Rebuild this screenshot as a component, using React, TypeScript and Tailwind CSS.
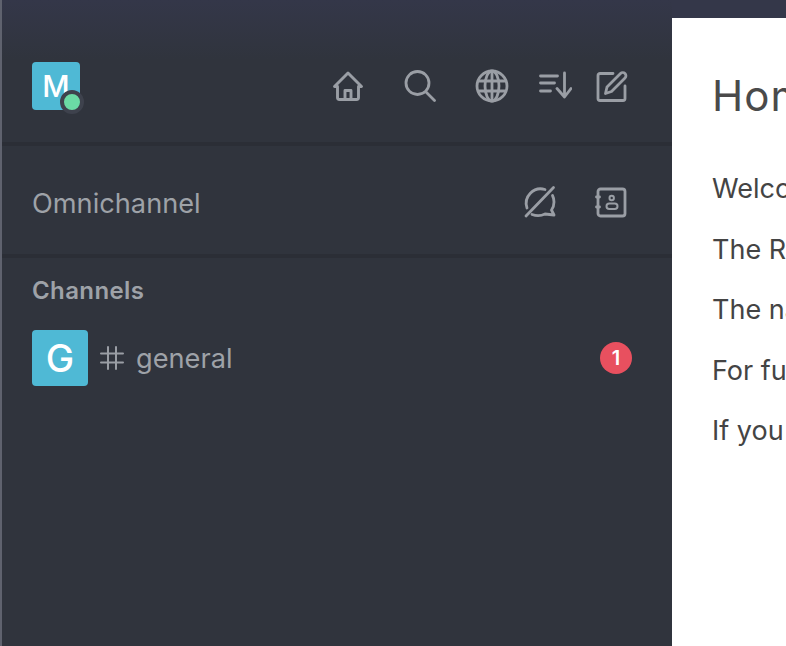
const FONT = "font-['Inter','Liberation_Sans',sans-serif]";

function IconButton({ children, className = "" }: { children: React.ReactNode; className?: string }) {
  return <div className={`flex h-9 w-9 items-center justify-center text-[#9a9ea5] ${className}`}>{children}</div>;
}

function HomeIcon() {
  return (
    <svg width="32" height="32" viewBox="0 0 32 32" fill="none" stroke="currentColor" strokeWidth="2.9" strokeLinecap="round" strokeLinejoin="round">
      <path d="M2.500 16.500 16 3l13.500 13.500h-3v11a2 2 0 0 1-2 2h-17a2 2 0 0 1-2-2v-11z" />
      <path d="M13 29v-8.500h6V29" />
    </svg>
  );
}

function SearchIcon() {
  return (
    <svg width="32" height="32" viewBox="0 0 32 32" fill="none" stroke="currentColor" strokeWidth="2.8" strokeLinecap="round">
      <circle cx="13.500" cy="13" r="11.500" />
      <path d="m22 22 8.500 8.500" />
    </svg>
  );
}

function GlobeIcon() {
  return (
    <svg width="34" height="34" viewBox="0 0 34 34" fill="none" stroke="currentColor" strokeWidth="2.8">
      <circle cx="17" cy="17" r="15" />
      <ellipse cx="17" cy="17" rx="7" ry="15" />
      <path d="M3.500 12h27M3.500 22h27M17 2v30" />
    </svg>
  );
}

function SortIcon() {
  return (
    <svg width="34" height="30" viewBox="0 0 34 30" fill="none" stroke="currentColor" strokeWidth="2.8" strokeLinecap="round" strokeLinejoin="round">
      <path d="M2.500 5h17M2.500 12h14M2.500 20h10" />
      <path d="M26.500 2v24M19 17.500l7.500 8.500 6.500-8.500" />
    </svg>
  );
}

function EditIcon() {
  return (
    <svg width="32" height="32" viewBox="0 0 32 32" fill="none" stroke="currentColor" strokeWidth="2.8" strokeLinecap="round" strokeLinejoin="round">
      <path d="M17 3.500H4a2 2 0 0 0-2 2v23a2 2 0 0 0 2 2h23a2 2 0 0 0 2-2V16" />
      <path d="M9.500 23.500 11 17 24.500 3.500a3 3 0 0 1 4.500 4.500L15.500 21.500z" />
    </svg>
  );
}

function ChatOffIcon() {
  return (
    <svg width="34" height="34" viewBox="0 0 34 34" fill="none" stroke="currentColor" strokeWidth="2.8" strokeLinecap="round" strokeLinejoin="round">
      <path d="M31.500 2.500 4 31" />
      <path d="M23 4.500A14.500 14.500 0 0 0 5 23" />
      <path d="M10 29.500c4 1.500 9 1.500 13-.5l9 1-2.500-5c1.500-2 2.500-4.500 2.500-8 0-2.500-.5-4.500-1.500-6.500" />
    </svg>
  );
}

function ContactIcon() {
  return (
    <svg width="32" height="32" viewBox="0 0 32 32" fill="none" stroke="currentColor" strokeWidth="2.800" strokeLinecap="round" strokeLinejoin="round">
      <rect x="3" y="3" width="27" height="27" rx="2.500" />
      <path d="M1.500 11h3M1.500 21h3" />
      <circle cx="16.700" cy="12" r="2.200" strokeWidth="2" />
      <rect x="11.500" y="17.500" width="11" height="5.500" rx="2.750" strokeWidth="2" />
    </svg>
  );
}

function HashIcon() {
  return (
    <svg width="24" height="24" viewBox="0 0 24 24" fill="none" stroke="currentColor" strokeWidth="2" strokeLinecap="round" className="text-[#9a9ea5]">
      <path d="M8 1v22M16 1v22M1 7.500h22M1 16.500h22" />
    </svg>
  );
}

export default function App() {
  return (
    <div className={`flex h-[646px] w-[786px] overflow-hidden border-l-2 border-[#5f626e] bg-[#343842] ${FONT}`}>
      <aside className="flex w-[670px] shrink-0 flex-col bg-gradient-to-b from-[#343749] from-0% to-[#30343d] to-[60px]">
        <header className="flex h-[146px] shrink-0 items-start border-b-4 border-[#2b2e36] pl-[30px] pr-[42px] pt-[62px]">
          <div className="relative flex h-12 w-12 items-center justify-center rounded-[4px] bg-[#4fb9d5] text-[30px] font-medium leading-none text-white">
            M
            <span className="absolute -bottom-[4px] -right-[4px] h-6 w-6 rounded-full border-4 border-[#3e424d] bg-[#6bdba5]" />
          </div>
          <div className="ml-auto flex pt-[6px]">
            <IconButton><HomeIcon /></IconButton>
            <IconButton className="ml-9"><SearchIcon /></IconButton>
            <IconButton className="ml-9"><GlobeIcon /></IconButton>
            <IconButton className="ml-[27px]"><SortIcon /></IconButton>
            <IconButton className="ml-[21px]"><EditIcon /></IconButton>
          </div>
        </header>
        <div className="flex h-[112px] shrink-0 items-center border-b-4 border-[#2b2e36] pl-[30px] pr-[43px] pt-1">
          <span className="pt-[4px] text-[27.2px] text-[#9ea2a8]">Omnichannel</span>
          <div className="ml-auto flex gap-[36px]">
            <IconButton><ChatOffIcon /></IconButton>
            <IconButton><ContactIcon /></IconButton>
          </div>
        </div>
        <div className="pl-[30px] pt-[17px] text-[24px] font-semibold leading-[32px] tracking-[0.4px] text-[#9ea2a8]">Channels</div>
        <div className="mt-[23px] flex h-14 items-center pl-[30px] pr-[40px]">
          <div className="flex h-14 w-14 items-center justify-center rounded-[4px] bg-[#4fb9d5] text-[38px] font-medium leading-none text-white">G</div>
          <div className="ml-3 flex items-center">
            <HashIcon />
          </div>
          <span className="ml-[12px] pt-[2px] text-[27.2px] text-[#9ea2a8]">general</span>
          <span className="ml-auto flex h-8 w-8 items-center justify-center rounded-full bg-[#e8505f] text-[20px] font-semibold leading-none text-white">1</span>
        </div>
      </aside>
      <div className="flex min-w-0 flex-1 flex-col bg-[#343749]">
        <div className="h-[18px] shrink-0" />
        <main className="flex-1 overflow-hidden whitespace-nowrap bg-white pl-10 text-[#444]">
          <h1 className="pt-[48px] text-[42px] leading-[60px] tracking-[1px] text-[#4a4a4a]">Home</h1>
          <div className="mt-[44px] flex flex-col gap-[23.500px] text-[27px] leading-[37px]">
            <p>Welcome to Rocket.Chat!</p>
            <p>The Rocket.Chat desktop apps</p>
            <p>The native mobile apps</p>
            <p>For further help</p>
            <p>If you need help</p>
          </div>
        </main>
      </div>
    </div>
  );
}
